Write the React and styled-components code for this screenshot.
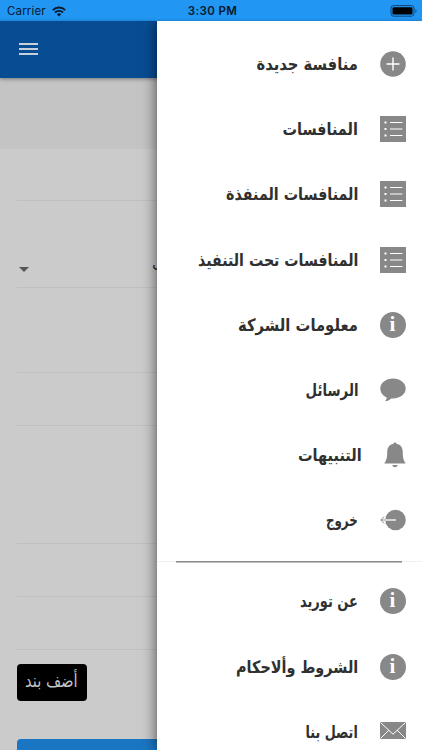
import React, { useLayoutEffect, useRef, useState } from 'react';
import styled, { createGlobalStyle } from 'styled-components';

const GlobalStyle = createGlobalStyle`
  * {
    box-sizing: border-box;
  }
  body {
    margin: 0;
    overflow: hidden;
  }
`;

const Screen = styled.div`
  position: relative;
  display: flex;
  flex-direction: column;
  height: 750px;
  overflow: hidden;
  background: #cbcbcb;
  font-family: 'DejaVu Sans', 'Noto Sans', sans-serif;
`;

const StatusBar = styled.div`
  flex: none;
  display: grid;
  grid-template-columns: 1fr auto 1fr;
  align-items: center;
  height: 21px;
  padding: 1px 4px 0 7px;
  background: #2196f3;
  color: #06182a;
  font-family: Inter, 'Liberation Sans', sans-serif;
  font-size: 11.5px;
  line-height: 20px;
`;

const Carrier = styled.div`
  display: flex;
  align-items: center;
  gap: 6px;
  letter-spacing: 0.15px;
`;

const Clock = styled.div`
  font-weight: 600;
  letter-spacing: 0.4px;
`;

const Battery = styled.svg`
  justify-self: end;
`;

const Toolbar = styled.div`
  position: relative;
  flex: none;
  display: flex;
  align-items: center;
  height: 57px;
  padding: 0 0 1px 19px;
  background: #084d94;
  box-shadow: 0 1px 4px rgba(0, 0, 0, 0.4);
`;

const MenuButton = styled.div`
  display: flex;
  flex-direction: column;
  gap: 3px;
  width: 19px;
`;

const MenuBar = styled.div`
  height: 2px;
  background: #c6cfda;
`;

const Banner = styled.div`
  flex: none;
  height: 71px;
  background: #c4c4c4;
`;

const Form = styled.div`
  flex: none;
  padding-left: 16.5px;
`;

const Field = styled.div`
  display: flex;
  align-items: flex-end;
  justify-content: space-between;
  height: ${props => props.height}px;
  border-bottom: 1px solid #c0c0c0;
`;

const Caret = styled.div`
  margin: 0 0 15px 2px;
  border: 5px solid transparent;
  border-top-color: #555;
  border-bottom: 0;
`;

const FieldValue = styled.div`
  width: 270px;
  margin-bottom: 10px;
  font-size: 16px;
  line-height: 24px;
  color: #333;
`;

const AddButton = styled.div`
  display: flex;
  align-items: center;
  justify-content: center;
  width: 70.5px;
  height: 37px;
  margin-top: 14px;
  padding-bottom: 3px;
  border-radius: 4px;
  background: #000;
`;

const SubmitButton = styled.div`
  height: 48px;
  margin: 38px 16px 0 0;
  border-radius: 4px;
  background: #1a76c2;
`;

const Drawer = styled.div`
  position: absolute;
  top: 21px;
  right: 0;
  bottom: 0;
  width: 265px;
  padding-top: 10.4px;
  direction: rtl;
  background: #fff;
  box-shadow: 0 0 14px rgba(0, 0, 0, 0.65);
  clip-path: inset(0 0 0 -30px);
`;

const Row = styled.div`
  display: flex;
  align-items: center;
  gap: 21.5px;
  height: 65.2px;
  padding-right: 16.5px;
`;

const Icon = styled.svg`
  flex: none;
  fill: #888;
`;

const MailSvg = styled(Icon)`
  margin-bottom: 3px;
`;

const InfoBadge = styled.div`
  flex: none;
  width: 26px;
  height: 26px;
  border-radius: 50%;
  background: #888;
  color: #fff;
  font: bold 21px/25px 'Liberation Serif', serif;
  text-align: center;
`;

const Label = styled.div`
  width: ${props => props.width}px;
  height: 24px;
  white-space: nowrap;
  color: #303030;
  font-size: 17px;
  font-weight: 700;
  line-height: 24px;
`;

const ButtonLabel = styled(Label)`
  color: #c4c4c4;
  font-size: 18px;
  font-weight: 400;
`;

const LabelText = styled.span`
  display: inline-block;
  transform-origin: ${props => props.$origin} center;
`;

const Separator = styled.div`
  display: flex;
  align-items: flex-start;
  height: 16px;
  padding: 8px 20px 0 19px;
  background: linear-gradient(#f0f0f0, #f0f0f0) 0 8px / 100% 1px no-repeat;
`;

const SeparatorLine = styled.div`
  flex: 1;
  height: 2px;
  background: linear-gradient(#8c8c8c 50%, #bcbcbc 50%);
`;

// squeezes the text so that it fills exactly the width of its label
function FitText({ children, width, origin = 'right' }) {
  const ref = useRef(null);
  const [scale, setScale] = useState(1);
  useLayoutEffect(() => {
    setScale(width / ref.current.offsetWidth);
  }, [width, children]);
  return (
    <LabelText ref={ref} $origin={origin} style={{ transform: `scaleX(${scale})` }}>
      {children}
    </LabelText>
  );
}

const PlusIcon = () => (
  <Icon width="26" height="26" viewBox="0 0 26 26">
    <circle cx="13" cy="13" r="12.8" />
    <path d="M13 6.5v13M6.5 13h13" stroke="#fff" strokeWidth="1.4" />
  </Icon>
);

const ListIcon = () => (
  <Icon width="26" height="26" viewBox="0 0 26 26">
    <rect width="26" height="26" />
    <path d="M10 6.5h12.4M10 13h12.4M10 19.5h12.4" stroke="#fff" strokeWidth="1.2" />
    <path d="M4.5 6.5h2M4.5 13h2M4.5 19.5h2" stroke="#fff" strokeWidth="2" />
  </Icon>
);

const InfoIcon = () => <InfoBadge>i</InfoBadge>;

const MessageIcon = () => (
  <Icon width="26" height="24" viewBox="0 0 26 24">
    <path d="M13 .5C5.800 .5 .3 4.900 .3 10.600c0 4 2.600 7.300 6.500 8.900-.2 1.500-.9 2.800-1.800 3.800 2.400-.2 4.700-1.300 6.200-2.900 8.200.8 14.500-3.800 14.500-9.800C25.700 4.900 20.200 .5 13 .5z" />
  </Icon>
);

const BellIcon = () => (
  <Icon width="22" height="26" viewBox="0 0 22 26">
    <path d="M11 .5c.8 0 1.400.5 1.500 1.200 4.300.8 6.300 4 6.300 8.600 0 5.200.6 8 2.900 11.200H.3c2.300-3.200 2.900-6 2.900-11.200 0-4.600 2-7.800 6.300-8.600C9.600 1 10.200.5 11 .5zM8.300 23h5.400c-.2 1.400-1.300 2.200-2.700 2.200S8.500 24.400 8.300 23z" />
  </Icon>
);

const ExitIcon = () => (
  <Icon width="26" height="22" viewBox="0 0 26 22">
    <circle cx="15.500" cy="11" r="10.300" />
    <path d="M5 11h11" stroke="#fff" strokeWidth="1.300" />
    <path d="M5.300 11H1M4 7.700L.8 11 4 14.300" fill="none" stroke="#888" strokeWidth="1" />
  </Icon>
);

const MailIcon = () => (
  <MailSvg width="26" height="17" viewBox="0 0 26 17">
    <rect width="26" height="17" />
    <path d="M.5.5L13 12.200 25.500.5M.5 16.500l8.300-8.300M25.500 16.500l-8.300-8.300" fill="none" stroke="#fff" strokeWidth="1" />
  </MailSvg>
);

const mainItems = [
  { text: 'منافسة جديدة', width: 101.5, icon: PlusIcon },
  { text: 'المنافسات', width: 75.5, icon: ListIcon },
  { text: 'المنافسات المنفذة', width: 132, icon: ListIcon },
  { text: 'المنافسات تحت التنفيذ', width: 160, icon: ListIcon },
  { text: 'معلومات الشركة', width: 120, icon: InfoIcon },
  { text: 'الرسائل', width: 52.5, icon: MessageIcon },
  { text: 'التنبيهات', width: 64, icon: BellIcon },
  { text: 'خروج', width: 32, icon: ExitIcon },
];

const moreItems = [
  { text: 'عن توريد', width: 58, icon: InfoIcon },
  { text: 'الشروط وألاحكام', width: 122, icon: InfoIcon },
  { text: 'اتصل بنا', width: 52.5, icon: MailIcon },
];

function MenuItem({ text, width, icon: ItemIcon }) {
  return (
    <Row>
      <ItemIcon />
      <Label width={width}>
        <FitText width={width}>{text}</FitText>
      </Label>
    </Row>
  );
}

export default function App() {
  return (
    <Screen>
      <GlobalStyle />
      <StatusBar>
        <Carrier>
          Carrier
          <svg width="14" height="11" viewBox="0 0 14 11" fill="none" stroke="#06182a" strokeWidth="1.9">
            <path d="M.8 4.100a8.800 8.800 0 0 1 12.400 0M3 6.500a5.700 5.700 0 0 1 8 0" />
            <path d="M7 10.600L4.800 8.300a3.200 3.200 0 0 1 4.400 0z" fill="#06182a" stroke="none" />
          </svg>
        </Carrier>
        <Clock>3:30 PM</Clock>
        <Battery width="28" height="12" viewBox="0 0 28 12">
          <rect x="1" y=".6" width="23" height="10.600" rx="2.600" fill="none" stroke="#0d4576" />
          <rect x="2.500" y="2.200" width="20" height="7.400" rx="1.300" />
          <path d="M25.500 4v4c1.300-.5 1.300-3.500 0-4z" fill="#0d4576" />
        </Battery>
      </StatusBar>
      <Toolbar>
        <MenuButton>
          <MenuBar />
          <MenuBar />
          <MenuBar />
        </MenuButton>
      </Toolbar>
      <Banner />
      <Form>
        <Field height={52} />
        <Field height={87}>
          <Caret />
          <FieldValue>ب</FieldValue>
        </Field>
        <Field height={85} />
        <Field height={53} />
        <Field height={118} />
        <Field height={53} />
        <Field height={53} />
        <AddButton>
          <ButtonLabel width={53}>
            <FitText width={53} origin="left">
              أضف بند
            </FitText>
          </ButtonLabel>
        </AddButton>
        <SubmitButton />
      </Form>
      <Drawer>
        {mainItems.map(item => (
          <MenuItem key={item.text} {...item} />
        ))}
        <Separator>
          <SeparatorLine />
        </Separator>
        {moreItems.map(item => (
          <MenuItem key={item.text} {...item} />
        ))}
      </Drawer>
    </Screen>
  );
}
